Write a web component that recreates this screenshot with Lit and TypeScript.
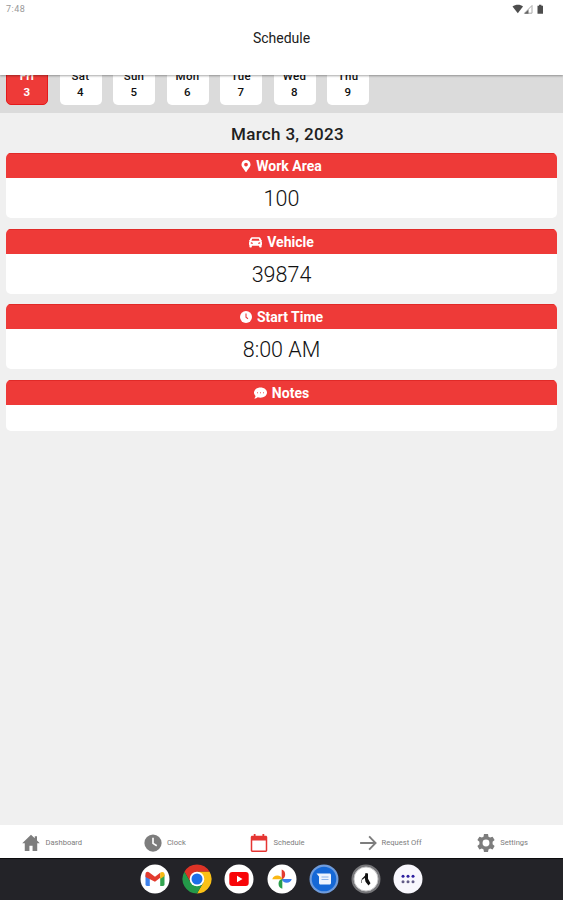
import { LitElement, html, css, svg, TemplateResult } from "lit";
import { customElement } from "lit/decorators.js";
import { classMap } from "lit/directives/class-map.js";

const icon = (cls: string, box: string, body: TemplateResult) =>
  html`<svg class=${cls} viewBox=${box} aria-hidden="true">${body}</svg>`;

const DAYS: [string, number][] = [
  ["Fri", 3], ["Sat", 4], ["Sun", 5], ["Mon", 6], ["Tue", 7], ["Wed", 8], ["Thu", 9],
];

const CARDS = [
  {
    title: "Work Area", value: "100", cls: "pin", box: "0 0 384 512",
    art: svg`<path fill="currentColor" fill-rule="evenodd" d="M172 502C27 291 0 270 0 192a192 192 0 0 1 384 0c0 78-27 99-172 310a24 24 0 0 1-40 0zM192 272a80 80 0 1 0 0-160 80 80 0 0 0 0 160z"/>`,
  },
  {
    title: "Vehicle", value: "39874", cls: "car", box: "0 0 512 448",
    art: svg`<path fill="currentColor" fill-rule="evenodd" d="M120 32h272c28 0 50 15 61 40l34 84h17c12 0 8 36-12 36l-9 4c19 14 29 30 29 60v60c0 16-6 28-16 40v52c0 18-14 32-32 32h-32c-18 0-32-14-32-32v-32H112v32c0 18-14 32-32 32H48c-18 0-32-14-32-32v-52C6 344 0 332 0 316v-60c0-30 10-46 29-60l-9-4C0 192-4 156 8 156h17l34-84c11-25 33-40 61-40zm8 64-32 80h320l-32-80zM100 232c-48 0-48 64 0 64 54 0 68 0 48-32-12-20-28-32-48-32zm312 0c-20 0-36 12-48 32-20 32-6 32 48 32 48 0 48-64 0-64z"/>`,
  },
  {
    title: "Start Time", value: "8:00 AM", cls: "time", box: "0 0 24 24",
    art: svg`<circle cx="12" cy="12" r="12" fill="currentColor"/><path class="cut" d="M12 5v7.500l4 3"/>`,
  },
  {
    title: "Notes", value: "", cls: "note", box: "0 0 26 24",
    art: svg`<path fill="currentColor" d="M13 1c7.200 0 13 4.500 13 10.200S20.200 21.500 13 21.500c-2 0-4-.4-5.600-1C5.600 22 3.200 23 .5 23c1.500-1.500 2.500-3.200 2.700-5C1.200 16.200 0 13.800 0 11.200 0 5.500 5.800 1 13 1z"/><g class="dots"><circle cx="7" cy="11.500" r="1.200"/><circle cx="13" cy="11.500" r="1.200"/><circle cx="19" cy="11.500" r="1.200"/></g>`,
  },
];

const TABS = [
  { label: "Dashboard", cls: "t1", art: svg`<path fill="currentColor" d="M12 1 .3 12.300h3.400V22.500h6.200v-6.700h4.200v6.700h6.200V12.300h3.400L20 8.700V3h-3v2.800z"/>` },
  { label: "Clock", cls: "t2", art: svg`<circle cx="12" cy="12" r="11.500" fill="currentColor"/><path fill="none" stroke="#fff" stroke-width="2.200" d="M12 5v7.500l5 3.200"/>` },
  { label: "Schedule", cls: "t3", art: svg`<path fill="currentColor" fill-rule="evenodd" d="M5 0h2.400v2.200h9.200V0H19v2.200h2c1.200 0 2 .9 2 2V21.800c0 1.200-.8 2.200-2 2.200H3c-1.200 0-2-1-2-2.200V4.200c0-1.100.8-2 2-2h2zM3 8.500v13.600h18V8.500z"/>` },
  { label: "Request Off", cls: "t4", art: svg`<path fill="none" stroke="currentColor" stroke-width="2.500" d="M1.500 12h20M13.500 3.200l8.600 8.800-8.600 8.800"/>` },
  { label: "Settings", cls: "t5", art: svg`<path fill="currentColor" fill-rule="evenodd" d="M9.300 0h5.400l.6 3.500 2.200 1.200 3.300-1.200 2.700 4.500-2.700 2.300v3.400l2.700 2.300-2.700 4.500-3.300-1.200-2.200 1.200-.6 3.500H9.300l-.6-3.500-2.200-1.200-3.300 1.200L.5 16l2.700-2.300v-3.400L.5 8l2.700-4.500 3.300 1.200 2.200-1.200zM12 7.400a4.600 4.600 0 1 0 0 9.200 4.600 4.600 0 0 0 0-9.200z"/>` },
];

const disc = (fill: string) => svg`<circle cx="15" cy="15" r="14.500" fill=${fill}/>`;

const APPS: TemplateResult[] = [
  // Gmail
  svg`${disc("#fff")}
    <path fill="#3f83ee" d="M5.500 10.500 9.800 13v9H7c-.9 0-1.500-.6-1.500-1.400z"/>
    <path fill="#33a450" d="M24.500 10.500 20.200 13v9H23c.9 0 1.500-.6 1.500-1.400z"/>
    <path fill="#e33b2e" d="M5.500 13V10c0-2 2.200-2.800 3.800-1.600L15 12.700l5.200-4v5L15 17.800z"/>
    <path fill="#f8b912" d="M20.200 8.700c1.900-1.400 4.300-.5 4.300 1.500V12l-4.300 3z"/>`,
  // Chrome
  svg`<path fill="#dd3326" d="M2.440 7.750A14.500 14.500 0 0 1 27.560 7.750H15L8.700 18.600z"/>
    <path fill="#fbc116" d="M27.560 7.750A14.500 14.500 0 0 1 15 29.500L21.300 18.600 15 7.750z"/>
    <path fill="#249a49" d="M15 29.500A14.500 14.500 0 0 1 2.440 7.750L8.700 18.600h12.600z"/>
    <circle cx="15" cy="15" r="7.300" fill="#fff"/><circle cx="15" cy="15" r="5.500" fill="#1b6fe8"/>`,
  // YouTube
  svg`${disc("#fff")}<rect x="5.300" y="8" width="19.400" height="14" rx="3" fill="#f80508"/><path fill="#fff" d="m13 11.800 5.500 3.200-5.500 3.200z"/>`,
  // Photos
  svg`${disc("#fff")}
    <path fill="#e33c30" d="M14.700 5.500a5.200 5.200 0 0 1 0 9.800z"/>
    <path fill="#3c80ee" d="M24.700 15a5.200 5.200 0 0 1-10 0z"/>
    <path fill="#2c9f4b" d="M15.300 24.700a5.200 5.200 0 0 1 0-10z"/>
    <path fill="#f9b713" d="M5.300 15.300a5.200 5.200 0 0 1 10 0z"/>`,
  // Messages
  svg`${disc("#6f9cdc")}<circle cx="15" cy="15" r="12.300" fill="#1568d6"/>
    <path fill="#eef4fd" d="M7.500 9.500h13c.9 0 1.500.6 1.500 1.500v8c0 .9-.6 1.500-1.500 1.500h-9c-.9 0-1.500-.6-1.500-1.500v-6.500z"/>
    <path stroke="#8fb5ea" d="M12.500 13h7M12.500 15.500h7"/>`,
  // Compass-like pointer
  svg`${disc("#77777a")}<circle cx="15" cy="15" r="12" fill="#fff" stroke="#c4c4c6"/>
    <path fill="#111" d="m14.500 9 2.500.5v5.200l2.500 4.500-2 2.300-3-3.800-.8-4-2.200 2-.8-.8 3.200-3.200z"/><path stroke="#888" d="M10.500 15.500v3.500"/>`,
  // App drawer
  svg`${disc("#f8f7fd")}<g fill="#2d1fa0"><circle cx="10" cy="12.300" r="1.500"/><circle cx="15" cy="12.300" r="1.500"/><circle cx="20" cy="12.300" r="1.500"/></g>
    <g fill="#625c87"><circle cx="10" cy="17.700" r="1.500"/><circle cx="15" cy="17.700" r="1.500"/><circle cx="20" cy="17.700" r="1.500"/></g>`,
];

@customElement("app-root")
export class AppRoot extends LitElement {
  static styles = css`
    :host {
      display: flex;
      flex-direction: column;
      width: 100%;
      height: 900px;
      overflow: hidden;
      background: #f0f0f0;
      color: #202020;
      font-family: Roboto, "Liberation Sans", sans-serif;
    }
    * { box-sizing: border-box; }
    svg { display: block; flex: none; }
    header {
      height: 75px;
      flex: none;
      background: #fff;
      box-shadow: 0 1px 2px rgba(0, 0, 0, 0.35);
      z-index: 1;
    }
    .status {
      display: flex;
      justify-content: space-between;
      height: 20px;
      padding: 4px 18px 0 6px;
      font-size: 9px;
      line-height: 11px;
      letter-spacing: 0.5px;
      color: #999;
    }
    .signals { width: 33px; height: 11px; }
    h1 {
      margin: 8px 0 0;
      font-size: 14px;
      line-height: 20px;
      font-weight: 400;
      text-align: center;
    }
    .strip {
      display: flex;
      align-items: flex-end;
      gap: 11.500px;
      height: 38px;
      flex: none;
      padding: 0 6px 8.500px;
      background: #dbdbdb;
    }
    .day {
      flex: none;
      width: 42px;
      height: 50px;
      padding-top: 13px;
      border-radius: 5px;
      background: #fff;
      text-align: center;
      font-size: 11.500px;
      line-height: 16px;
      font-weight: 500;
      letter-spacing: 0.3px;
      color: #111;
    }
    .day.on {
      background: #ee3a38;
      border: 1px solid #e5191b;
      padding-top: 12px;
      color: #fff;
      font-weight: 700;
    }
    main { flex: 1; padding: 0 6px; }
    h2 {
      margin: 0;
      height: 40px;
      padding: 10px 0 0 12px;
      font-size: 17px;
      line-height: 22px;
      font-weight: 500;
      letter-spacing: 0.320px;
      text-align: center;
    }
    .cards { display: flex; flex-direction: column; gap: 10.600px; }
    .card { border-radius: 5px; overflow: hidden; background: #fff; }
    .head {
      display: flex;
      align-items: center;
      justify-content: center;
      gap: 5px;
      height: 25px;
      border-top: 1px solid #e02a28;
      background: #ee3a38;
      color: #fff;
      font-size: 14px;
      line-height: 24px;
      font-weight: 700;
    }
    .value {
      height: 40px;
      font-size: 21.500px;
      line-height: 42px;
      text-align: center;
      font-weight: 300;
      color: #111;
    }
    .value.none { height: 26px; }
    .pin { width: 10px; height: 12px; }
    .car { width: 13px; height: 12px; }
    .time { width: 12px; height: 12px; }
    .note { width: 13px; height: 12px; }
    .cut { fill: none; stroke: #ee3a38; stroke-width: 2.200; }
    .dots { fill: #ee3a38; }
    nav {
      display: grid;
      grid-template-columns: repeat(5, 1fr);
      height: 33px;
      flex: none;
      background: #fff;
    }
    .tab {
      display: flex;
      align-items: center;
      justify-content: center;
      gap: 5px;
      padding: 2px 8px 0 0;
      color: #7d7d7d;
      font-size: 7.600px;
    }
    .tab svg { width: 18px; height: 18px; }
    .t3 svg { color: #e53532; }
    .dock {
      display: flex;
      justify-content: center;
      gap: 12.200px;
      height: 42px;
      flex: none;
      padding-top: 5px;
      background: #232328;
      border-top: 1px solid #0c0c0d;
    }
    .app { width: 30px; height: 30px; }
  `;

  render() {
    return html`
      <header>
        <div class="status">
          <span>7:48</span>
          ${icon("signals", "0 0 33 11", svg`
            <path fill="#4d4d4d" d="M.5 2.500C3.500.3 8.500.3 11 2.500L5.800 9.300z"/>
            <path fill="#fff" stroke="#aaa" d="M12.500 9.200 20 1.500v7.700z"/><path fill="#666" d="M12.200 9.700 16.500 5.500v4.200z"/>
            <path fill="#4d4d4d" d="M25.500 1.800h1.500V.8h2.400v1H31v8h-5.500z"/>`)}
        </div>
        <h1>Schedule</h1>
      </header>
      <div class="strip">
        ${DAYS.map(([name, date], i) => html`
          <div class=${classMap({ day: true, on: i === 0 })}><div>${name}</div><div>${date}</div></div>`)}
      </div>
      <main>
        <h2>March 3, 2023</h2>
        <div class="cards">
          ${CARDS.map((c) => html`
            <section class="card">
              <div class="head">${icon(c.cls, c.box, c.art)}<span>${c.title}</span></div>
              <div class=${classMap({ value: true, none: !c.value })}>${c.value}</div>
            </section>`)}
        </div>
      </main>
      <nav>
        ${TABS.map((t) => html`<div class="tab ${t.cls}">${icon("", "0 0 24 24", t.art)}<span>${t.label}</span></div>`)}
      </nav>
      <div class="dock">${APPS.map((a) => icon("app", "0 0 30 30", a))}</div>
    `;
  }
}
